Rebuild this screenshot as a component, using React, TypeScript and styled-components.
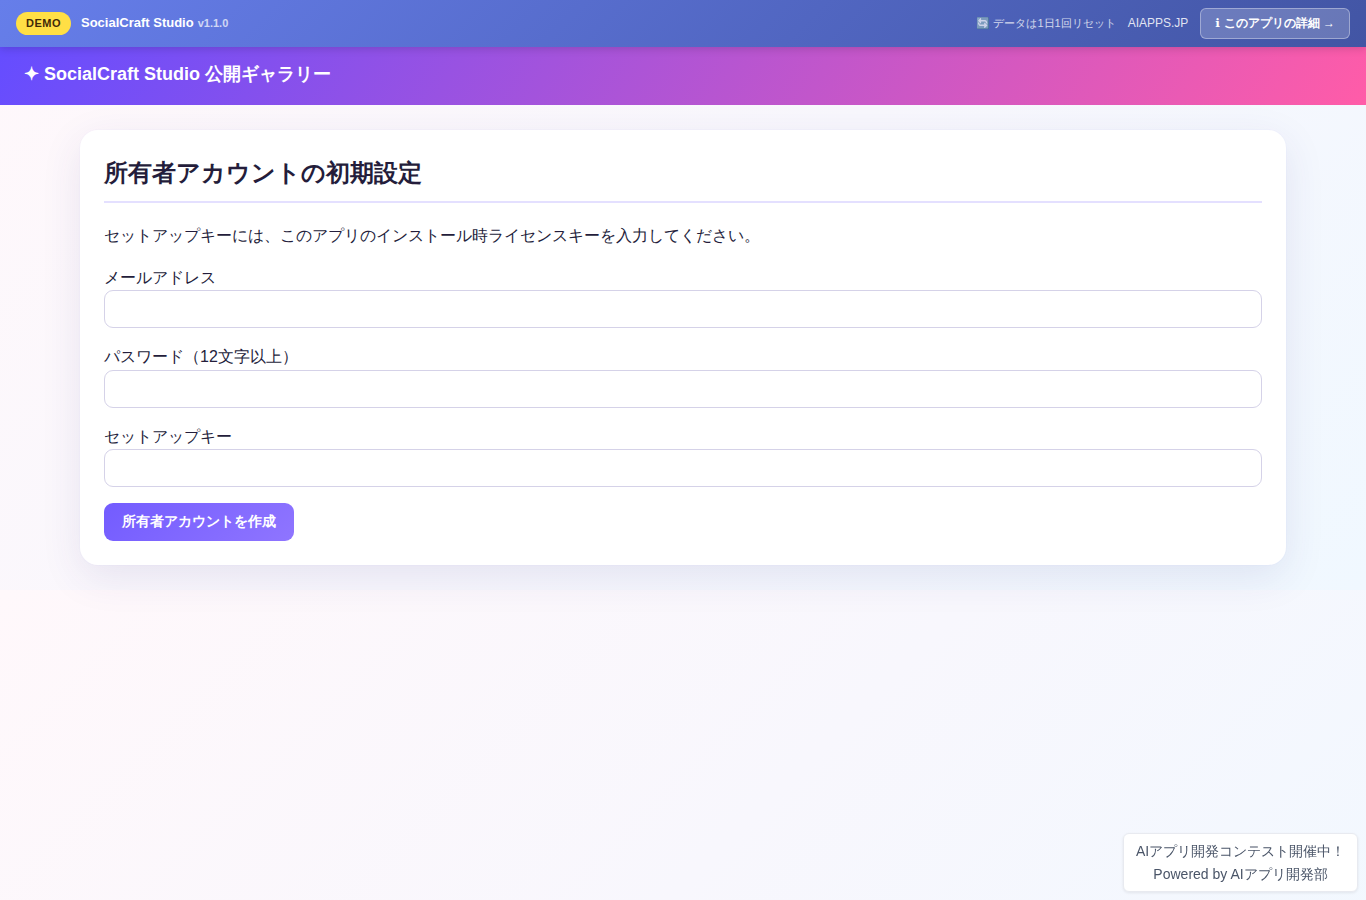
import React from "react";
import styled, { createGlobalStyle } from "styled-components";

const GlobalStyle = createGlobalStyle`
  * { box-sizing: border-box; }
  body {
    margin: 0;
    min-height: 100vh;
    color: #241d3b;
    font-family: "Liberation Sans", sans-serif;
    font-size: 16px;
    line-height: 24px;
    background: linear-gradient(135deg, #fff8fb 0%, #f8f7fd 50%, #f0f8ff 100%) 0 0 / 100% 590px;
  }
`;

const DemoBar = styled.div`
  position: relative;
  z-index: 2;
  display: flex;
  align-items: center;
  justify-content: space-between;
  height: 47px;
  padding: 0 16px;
  color: #fff;
  background: linear-gradient(135deg, #667eea 0%, #4255a4 100%);
  box-shadow: 0 2px 8px rgba(0, 0, 0, 0.15);
`;

const BarGroup = styled.div<{ $gap: number }>`
  display: flex;
  align-items: center;
  gap: ${(p) => p.$gap}px;
`;

const DemoBadge = styled.span`
  padding: 0 10px;
  border-radius: 12px;
  background: #ffdf45;
  color: #3f2a08;
  font-size: 11px;
  font-weight: 700;
  line-height: 23px;
  letter-spacing: 0.5px;
`;

const AppName = styled.span`
  padding-bottom: 2px;
  font-size: 13px;
  font-weight: 700;
  line-height: 20px;
`;

const Version = styled.span`
  margin-left: 0.4px;
  font-size: 11px;
  opacity: 0.7;
`;

const ResetNote = styled.span`
  padding-bottom: 2px;
  font-size: 11px;
  line-height: 18px;
  opacity: 0.75;
`;

const SiteLink = styled.a`
  padding-bottom: 2px;
  color: rgba(255, 255, 255, 0.85);
  font-size: 12px;
  line-height: 18px;
`;

const DetailLink = styled.a`
  height: 31px;
  padding: 0 14px;
  border: 1px solid rgba(255, 255, 255, 0.35);
  border-radius: 6px;
  background: rgba(255, 255, 255, 0.2);
  font-size: 12px;
  font-weight: 700;
  line-height: 29px;
`;

const InfoGlyph = styled.span`
  margin-right: 0.4px;
  font-family: "DejaVu Sans", sans-serif;
  line-height: 1;
`;

const Header = styled.header`
  height: 58px;
  padding: 15px 24px;
  color: #fff;
  background: linear-gradient(120deg, #654dff 0%, #ff5ca8 100%);
  font-size: 18px;
  font-weight: 700;
`;

const Card = styled.main`
  margin: 25px 80px 0;
  height: 435px;
  padding: 24px;
  border-radius: 18px;
  background: #fff;
  box-shadow: 0 0 0 1px rgba(101, 77, 255, 0.02), 0 12px 40px rgba(61, 48, 125, 0.1);
`;

const Title = styled.h1`
  margin: 0 0 21px;
  height: 49px;
  border-bottom: 2px solid #e4e0ff;
  font-size: 24px;
  line-height: 38px;
`;

const Guide = styled.p`
  margin: 0 0 18px;
`;

const Field = styled.label`
  display: block;
  margin-bottom: 17.2px;
`;

const Input = styled.input`
  display: block;
  width: 100%;
  height: 38px;
  margin: 0.2px 0 0;
  padding: 8px 12px;
  border: 1px solid #d5d2e8;
  border-radius: 9px;
  background: #fff;
  font: inherit;
`;

const Submit = styled.button`
  display: block;
  margin-top: -1.2px;
  width: 190px;
  height: 38px;
  padding: 0 0 2px;
  border: 0;
  border-radius: 9px;
  color: #fff;
  background: linear-gradient(135deg, #735cff, #8f75ff);
  font: 700 14px/20px "Liberation Sans", sans-serif;
`;

const Notice = styled.aside`
  position: fixed;
  right: 8px;
  bottom: 8px;
  width: 235px;
  height: 59px;
  padding: 6px 0;
  border: 1px solid #e8eaf0;
  border-radius: 6px;
  background: #fff;
  color: #4a5568;
  box-shadow: 0 1px 3px rgba(0, 0, 0, 0.08);
  font-size: 14px;
  line-height: 23px;
  text-align: center;
`;

const fields = [
  { label: "メールアドレス", type: "email" },
  { label: "パスワード（12文字以上）", type: "password" },
  { label: "セットアップキー", type: "password" },
];

export default function App() {
  return (
    <>
      <GlobalStyle />
      <DemoBar>
        <BarGroup $gap={10}>
          <DemoBadge>DEMO</DemoBadge>
          <AppName>
            SocialCraft Studio <Version>v1.1.0</Version>
          </AppName>
        </BarGroup>
        <BarGroup $gap={12}>
          <ResetNote>🔄 データは1日1回リセット</ResetNote>
          <SiteLink>AIAPPS.JP</SiteLink>
          <DetailLink>
            <InfoGlyph>ℹ</InfoGlyph> このアプリの詳細 →
          </DetailLink>
        </BarGroup>
      </DemoBar>
      <Header>✦ SocialCraft Studio 公開ギャラリー</Header>
      <Card>
        <Title>所有者アカウントの初期設定</Title>
        <Guide>
          セットアップキーには、このアプリのインストール時ライセンスキーを入力してください。
        </Guide>
        {fields.map((f) => (
          <Field key={f.label}>
            {f.label}
            <Input type={f.type} />
          </Field>
        ))}
        <Submit>所有者アカウントを作成</Submit>
      </Card>
      <Notice>
        <div>AIアプリ開発コンテスト開催中！</div>
        <div>Powered by AIアプリ開発部</div>
      </Notice>
    </>
  );
}
